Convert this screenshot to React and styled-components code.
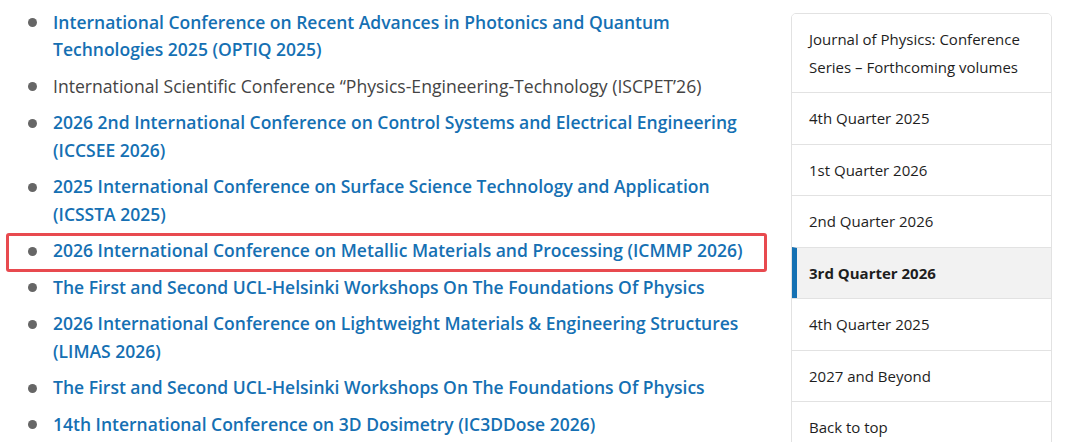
import React from 'react'
import styled, { createGlobalStyle } from 'styled-components'

const GlobalStyle = createGlobalStyle`
  body {
    margin: 0;
    background: #fff;
    font-family: 'Open Sans', 'Noto Sans', sans-serif;
  }
`

const conferences = [
  { title: 'International Conference on Recent Advances in Photonics and Quantum Technologies 2025 (OPTIQ 2025)', link: true },
  { title: 'International Scientific Conference \u201cPhysics-Engineering-Technology (ISCPET\u201926)', link: false },
  { title: '2026 2nd International Conference on Control Systems and Electrical Engineering (ICCSEE 2026)', link: true },
  { title: '2025 International Conference on Surface Science Technology and Application (ICSSTA 2025)', link: true },
  { title: '2026 International Conference on Metallic Materials and Processing (ICMMP 2026)', link: true, marked: true },
  { title: 'The First and Second UCL-Helsinki Workshops On The Foundations Of Physics', link: true },
  { title: '2026 International Conference on Lightweight Materials & Engineering Structures (LIMAS 2026)', link: true },
  { title: 'The First and Second UCL-Helsinki Workshops On The Foundations Of Physics', link: true },
  { title: '14th International Conference on 3D Dosimetry (IC3DDose 2026)', link: true },
]

const navItems = [
  { label: 'Journal of Physics: Conference Series \u2013 Forthcoming volumes' },
  { label: '4th Quarter 2025' },
  { label: '1st Quarter 2026' },
  { label: '2nd Quarter 2026' },
  { label: '3rd Quarter 2026', active: true },
  { label: '4th Quarter 2025' },
  { label: '2027 and Beyond' },
  { label: 'Back to top' },
]

function App() {
  return (
    <>
      <GlobalStyle />
      <Page>
        <ConferenceList>
          {conferences.map((item, index) => (
            <Conference key={index} $marked={item.marked}>
              {item.link ? <ConfLink href="#">{item.title}</ConfLink> : <ConfText>{item.title}</ConfText>}
            </Conference>
          ))}
        </ConferenceList>
        <Sidebar>
          {navItems.map((item, index) => (
            <NavItem key={index} $active={item.active}>
              {item.label}
            </NavItem>
          ))}
        </Sidebar>
      </Page>
    </>
  )
}

const Page = styled.div`
  display: flex;
  align-items: flex-start;
  justify-content: space-between;
  width: 1080px;
  height: 442px;
  overflow: hidden;
  padding-right: 28px;
  box-sizing: border-box;
`

const ConferenceList = styled.ul`
  flex: 0 0 773px;
  box-sizing: border-box;
  list-style: none;
  margin: 0;
  padding: 8.5px 0 0 53px;
`

const Conference = styled.li`
  position: relative;
  font-size: 17.5px;
  line-height: 27.5px;
  margin-bottom: 9px;

  &::before {
    content: '';
    position: absolute;
    left: -25px;
    top: 9.5px;
    width: 9px;
    height: 9px;
    border-radius: 50%;
    background: #666;
  }

  ${(p) =>
    p.$marked &&
    `
    &::after {
      content: '';
      position: absolute;
      left: -47px;
      right: 6px;
      top: -4.5px;
      bottom: -7.5px;
      border: 3.5px solid #e84a4f;
      border-radius: 3px;
    }
  `}
`

const ConfLink = styled.a`
  color: #1570b3;
  font-weight: 600;
  text-decoration: none;
`

const ConfText = styled.span`
  color: #444;
  font-weight: 400;
  font-size: 17.6px;
`

const Sidebar = styled.nav`
  flex: 0 0 261px;
  box-sizing: border-box;
  margin-top: 13px;
  border: 1px solid #e2e2e2;
  border-radius: 5px;
  overflow: hidden;
`

const NavItem = styled.div`
  font-size: 15px;
  line-height: 28px;
  color: #1e1e1e;
  padding: 11.25px 17px 11.25px ${(p) => (p.$active ? '12px' : '17px')};
  border-top: 1px solid #e2e2e2;
  font-weight: ${(p) => (p.$active ? 700 : 400)};
  background: ${(p) => (p.$active ? '#f2f2f2' : '#fff')};
  border-left: ${(p) => (p.$active ? '5px solid #1571b3' : 'none')};

  &:first-child {
    border-top: none;
    padding-top: 11px;
    padding-bottom: 11px;
  }
`

export default App
